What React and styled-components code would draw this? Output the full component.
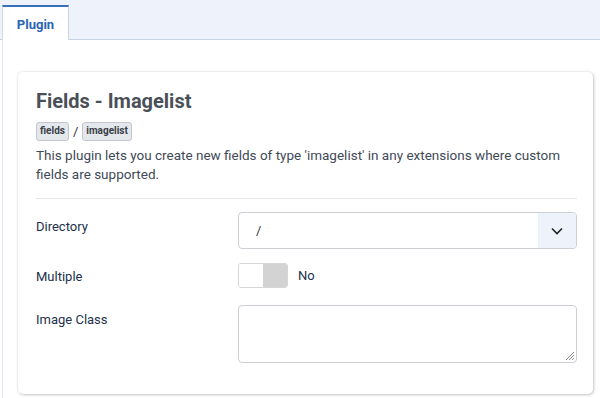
import React from "react";
import styled, { createGlobalStyle } from "styled-components";

const GlobalStyle = createGlobalStyle`
  html, body {
    margin: 0;
    padding: 0;
    background: #ffffff;
    font-family: Roboto, "Liberation Sans", sans-serif;
  }
`;

const Page = styled.div`
  width: 600px;
  height: 398px;
  overflow: hidden;
  background: #ffffff;
`;

const TabBar = styled.div`
  display: flex;
  height: 34px;
  padding: 5px 0 0 2px;
  background: #eef2fa;
  border-bottom: 1px solid #c7d2e2;
`;

const Tab = styled.div`
  width: 65px;
  display: flex;
  align-items: center;
  justify-content: center;
  background: #ffffff;
  border-top: 2px solid #3a6fc0;
  border-left: 1px solid #d3dbe8;
  border-right: 1px solid #c7d2e2;
  margin-bottom: -1px;
  color: #2a64b4;
  font-size: 13px;
  font-weight: 700;
  padding-top: 2px;
`;

const Panel = styled.div`
  margin-left: 2px;
  border-left: 1px solid #dde4ef;
  padding: 32px 7px 0 15px;
  height: 330px;
`;

const Card = styled.div`
  background: #ffffff;
  border-radius: 5px;
  box-shadow: 0 0 3px rgba(0, 0, 0, 0.12), 1px 1px 3px rgba(0, 0, 0, 0.18);
  padding: 16px 16px 31px 18px;
`;

const Title = styled.h2`
  margin: 0;
  font-size: 20px;
  font-weight: 700;
  color: #4a5058;
  line-height: 26px;
`;

const Crumbs = styled.div`
  display: flex;
  align-items: center;
  gap: 4px;
  margin-top: 8px;
  font-size: 13px;
  color: #333;
`;

const Badge = styled.span`
  display: inline-block;
  padding: 2px 3px 3px;
  font-size: 10px;
  font-weight: 700;
  line-height: 12px;
  color: #3a4048;
  background: #e4e7ec;
  border: 1px solid #c2c7cf;
  border-radius: 3px;
`;

const Description = styled.p`
  margin: 5px 0 0;
  font-size: 13.5px;
  line-height: 19px;
  color: #3f4a58;
`;

const Divider = styled.hr`
  margin: 14px 0 13px;
  border: 0;
  border-top: 1px solid #e6e8eb;
`;

const Row = styled.div`
  display: grid;
  grid-template-columns: 202px 1fr;
  align-items: start;
  margin-bottom: ${(p) => p.gap ?? 14}px;
`;

const Label = styled.div`
  font-size: 13px;
  color: #22314c;
  padding-top: ${(p) => p.top ?? 7}px;
`;

const Select = styled.div`
  display: flex;
  height: 35px;
  border: 1px solid #cbcfd4;
  border-radius: 4px;
  overflow: hidden;
`;

const SelectValue = styled.div`
  flex: 1;
  display: flex;
  align-items: center;
  padding-left: 17px;
  font-size: 13px;
  color: #333;
`;

const SelectArrow = styled.div`
  width: 38px;
  display: flex;
  align-items: center;
  justify-content: center;
  background: #eef2fa;
`;

const SwitchRow = styled.div`
  display: flex;
  align-items: center;
  gap: 10px;
  font-size: 13px;
  color: #22314c;
`;

const Switch = styled.div`
  display: flex;
  width: 48px;
  height: 23px;
  border: 1px solid #d6d6d6;
  border-radius: 3px;
  overflow: hidden;
`;

const SwitchHalf = styled.div`
  flex: 1;
  background: ${(p) => (p.on ? "#d3d3d3" : "#ffffff")};
`;

const TextArea = styled.div`
  position: relative;
  height: 56px;
  border: 1px solid #cbcfd4;
  border-radius: 4px;
`;

const Grip = styled.svg`
  position: absolute;
  right: 1px;
  bottom: 1px;
`;

export default function App() {
  return (
    <>
      <GlobalStyle />
      <Page>
        <TabBar>
          <Tab>Plugin</Tab>
        </TabBar>
        <Panel>
          <Card>
            <Title>Fields - Imagelist</Title>
            <Crumbs>
              <Badge>fields</Badge>
              <span>/</span>
              <Badge>imagelist</Badge>
            </Crumbs>
            <Description>
              This plugin lets you create new fields of type 'imagelist' in any extensions where custom
              fields are supported.
            </Description>
            <Divider />
            <Row gap={14}>
              <Label top={7}>Directory</Label>
              <Select>
                <SelectValue>/</SelectValue>
                <SelectArrow>
                  <svg width="12" height="8" viewBox="0 0 12 8">
                    <path d="M1 1.5 L6 6.5 L11 1.5" fill="none" stroke="#222" strokeWidth="1.6" />
                  </svg>
                </SelectArrow>
              </Select>
            </Row>
            <Row gap={17}>
              <Label top={6}>Multiple</Label>
              <SwitchRow>
                <Switch>
                  <SwitchHalf />
                  <SwitchHalf on />
                </Switch>
                No
              </SwitchRow>
            </Row>
            <Row gap={0}>
              <Label top={7}>Image Class</Label>
              <TextArea>
                <Grip width="10" height="10" viewBox="0 0 10 10">
                  <path d="M9 1 L1 9 M9 4 L4 9 M9 7 L7 9" stroke="#888" strokeWidth="1" />
                </Grip>
              </TextArea>
            </Row>
          </Card>
        </Panel>
      </Page>
    </>
  );
}
